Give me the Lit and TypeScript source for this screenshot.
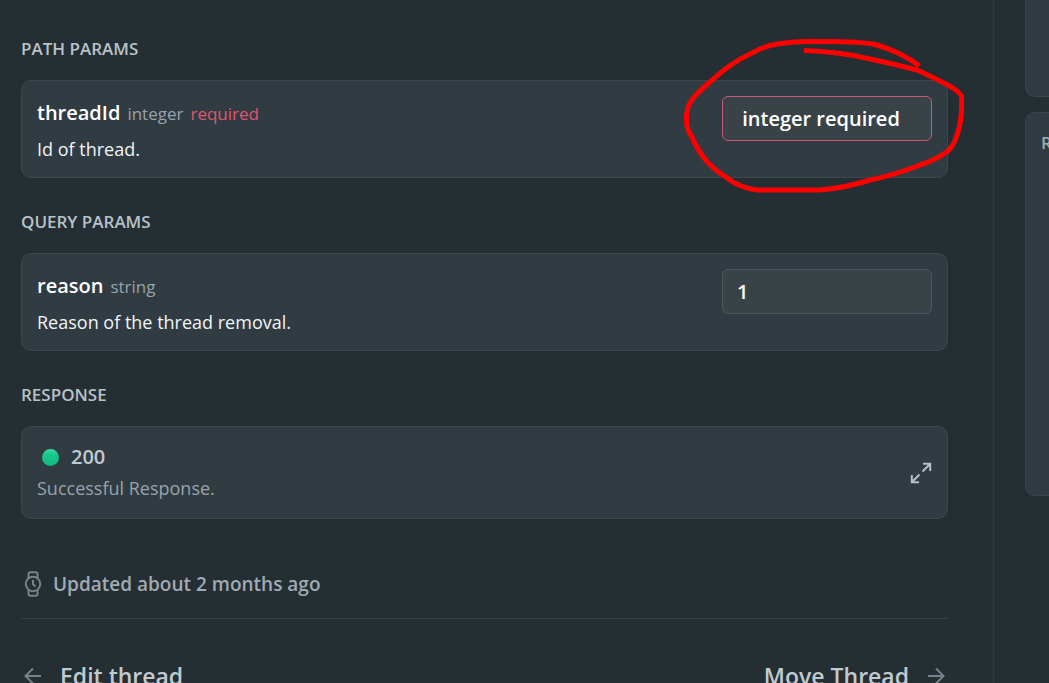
import { LitElement, html, css, svg, nothing } from "lit";
import { customElement, property } from "lit/decorators.js";

@customElement("param-card")
class ParamCard extends LitElement {
  @property() name = "";
  @property() type = "";
  @property() description = "";
  @property() value = "";
  @property({ type: Boolean }) required = false;
  @property({ type: Boolean }) marked = false;

  static styles = css`
    :host {
      display: block;
    }
    .card {
      position: relative;
      display: flex;
      justify-content: space-between;
      align-items: flex-start;
      gap: 16px;
      box-sizing: border-box;
      padding: 15px;
      border: 1px solid #3c474d;
      border-radius: 10px;
      background: #303b42;
    }
    .signature {
      display: flex;
      align-items: baseline;
      gap: 7px;
      line-height: 34px;
    }
    .name {
      font-size: 20px;
      font-weight: 600;
      color: #fff;
    }
    .type {
      font-size: 17px;
      color: #98a3ac;
    }
    .required {
      font-size: 17px;
      color: #e0566f;
    }
    .description {
      margin: 0;
      padding-top: 5px;
      font-size: 18px;
      line-height: 26px;
      color: #f1f5f8;
    }
    .field {
      box-sizing: border-box;
      width: 210px;
      height: 45px;
      padding: 0 14px;
      border: 1px solid #4b565c;
      border-radius: 6px;
      background: #394347;
      font: inherit;
      font-size: 20px;
      font-weight: 600;
      color: #fff;
      outline: none;
    }
    .field.invalid {
      border-color: #c85878;
    }
    .mark {
      position: absolute;
      top: -45px;
      right: -23px;
      pointer-events: none;
    }
  `;

  render() {
    return html`
      <div class="card">
        <div class="text">
          <label class="signature" for="field">
            <span class="name">${this.name}</span>
            <span class="type">${this.type}</span>
            ${this.required ? html`<span class="required">required</span>` : nothing}
          </label>
          <p class="description">${this.description}</p>
        </div>
        <input
          id="field"
          class="field ${this.required ? "invalid" : ""}"
          type="text"
          .value=${this.value}
        />
        ${this.marked
          ? html`<svg class="mark" width="290" height="160" viewBox="0 0 290 160" aria-hidden="true">
              ${svg`<path
                d="M124 14.500Q140 15 157 17Q174 19 190 23Q214 28 237 34Q257 43 273 52Q279 56 281.500 60Q282 70 281 81Q280 91 277 99Q274 109 268 115Q256 124 240 129Q215 139 190 144Q165 152 140 154H77Q60 152 47 142Q36 135 28 127Q17 114 12 101Q6 93 6.500 84Q6 73 11 65Q17 57 30 46Q50 27 72 17Q84 10 97 8Q113 5 130 5.500H155Q185 6 197 9Q210 13 220 18Q235 26 239 30"
                fill="none" stroke="#fe0000" stroke-width="5" stroke-linejoin="round" />`}
            </svg>`
          : nothing}
      </div>
    `;
  }
}

@customElement("app-root")
class AppRoot extends LitElement {
  static styles = css`
    :host {
      display: grid;
      grid-template-columns: minmax(0, 1fr) 55px;
      height: 100vh;
      overflow: hidden;
      background: #242e33;
      color: #c0cad1;
      font-family: "Open Sans", "Noto Sans", sans-serif;
    }
    .main {
      padding: 5px 45px 0 21px;
      border-right: 1px solid #303b41;
    }
    .heading {
      margin: 32px 0 19px;
      font-size: 17px;
      line-height: 24px;
      font-weight: 600;
      color: #b8c2c9;
    }
    .response {
      display: flex;
      align-items: center;
      justify-content: space-between;
      padding: 15px;
      border: 1px solid #3c474d;
      border-radius: 10px;
      background: #303b42;
    }
    .status {
      display: flex;
      align-items: center;
      gap: 12px;
      padding-left: 5px;
      font-size: 20px;
      line-height: 30px;
      font-weight: 600;
    }
    .dot {
      width: 17px;
      height: 17px;
      border-radius: 50%;
      background: linear-gradient(#3fdca4, #18c98b 30%, #12b87e);
    }
    .summary {
      margin: 0;
      padding-top: 2px;
      font-size: 18px;
      line-height: 29px;
      color: #98a3ac;
    }
    .expand {
      display: flex;
      padding: 0;
      border: 0;
      background: none;
      color: #b4bfc8;
    }
    .updated {
      display: flex;
      align-items: center;
      gap: 8px;
      margin-top: 52px;
      padding-bottom: 21px;
      border-bottom: 1px solid #343f45;
      font-size: 19px;
      line-height: 24px;
      font-weight: 600;
      color: #a0abb3;
    }
    .muted {
      color: #77828a;
    }
    .pager {
      display: flex;
      justify-content: space-between;
      padding-top: 41px;
    }
    .link {
      display: flex;
      align-items: center;
      gap: 16px;
      font-size: 23px;
      line-height: 32px;
      font-weight: 600;
      color: #c0cad1;
      text-decoration: none;
    }
    .aside {
      display: flex;
      flex-direction: column;
      gap: 15px;
      overflow: hidden;
      padding-left: 31px;
    }
    .panel {
      flex: none;
      box-sizing: border-box;
      width: 320px;
      height: 384px;
      padding: 18px 15px;
      border: 1px solid #3c474d;
      border-radius: 10px;
      background: #303b42;
      font-size: 17px;
      line-height: 24px;
      font-weight: 600;
      color: #a0abb3;
    }
    .panel.upper {
      height: 97px;
      border-top: 0;
      border-radius: 0 0 10px 10px;
    }
  `;

  render() {
    return html`
      <main class="main">
        <h2 class="heading">PATH PARAMS</h2>
        <param-card
          name="threadId"
          type="integer"
          description="Id of thread."
          value=" integer required"
          required
          marked
        ></param-card>

        <h2 class="heading">QUERY PARAMS</h2>
        <param-card
          name="reason"
          type="string"
          description="Reason of the thread removal."
          value="1"
        ></param-card>

        <h2 class="heading">RESPONSE</h2>
        <section class="response">
          <div>
            <div class="status"><span class="dot"></span>200</div>
            <p class="summary">Successful Response.</p>
          </div>
          <button class="expand" aria-label="Expand response">
            <svg width="22" height="22" viewBox="0 0 22 22" fill="none" stroke="currentColor" stroke-width="2">
              <path d="M12.500 9.500L20 2M13 1.800h7.200V9M9.500 12.500L2 20M1.800 13v7.200H9" />
            </svg>
          </button>
        </section>

        <div class="updated">
          <svg class="muted" width="24" height="26" viewBox="0 0 24 26" fill="none" stroke="currentColor" stroke-width="2">
            <circle cx="12" cy="13" r="7.200" />
            <path d="M12 9v4.300l2.500 2.200M7.500 7V3q0-1.800 1.800-1.800h5.400q1.800 0 1.800 1.800v4M7.500 19v4q0 1.800 1.800 1.800h5.400q1.800 0 1.800-1.800v-4" />
          </svg>
          Updated about 2 months ago
        </div>

        <nav class="pager">
          <a class="link" href="#edit">
            <svg class="muted" width="23" height="18" viewBox="0 0 23 18" fill="none" stroke="currentColor" stroke-width="2">
              <path d="M20 9H5M12 1.500L4.500 9l7.500 7.500" />
            </svg>
            Edit thread
          </a>
          <a class="link" href="#move">
            Move Thread
            <svg class="muted" width="23" height="18" viewBox="0 0 23 18" fill="none" stroke="currentColor" stroke-width="2">
              <path d="M3 9h15M11 1.500L18.500 9L11 16.500" />
            </svg>
          </a>
        </nav>
      </main>
      <aside class="aside">
        <section class="panel upper"></section>
        <section class="panel">RESPONSE</section>
      </aside>
    `;
  }
}
